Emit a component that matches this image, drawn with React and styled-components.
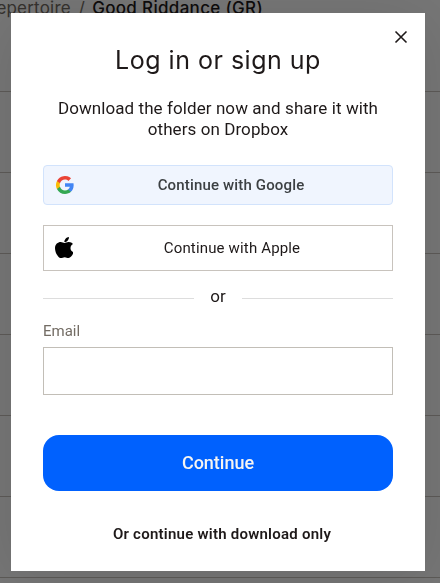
import { useState } from "react";
import styled, { createGlobalStyle } from "styled-components";

const GlobalStyle = createGlobalStyle`
  * {
    box-sizing: border-box;
  }

  body {
    margin: 0;
    overflow: hidden;
    background: #fff;
    color: #1e1919;
    font-family: Roboto, "Liberation Sans", sans-serif;
  }

  button,
  input {
    font-family: inherit;
    color: inherit;
  }
`;

const Page = styled.div`
  height: 100vh;
  overflow: hidden;
`;

const Breadcrumbs = styled.nav`
  display: flex;
  justify-content: flex-end;
  width: 263px;
  height: 92px;
  white-space: nowrap;
  font-family: Inter, "Liberation Sans", sans-serif;
  font-size: 17px;
  line-height: 16px;
  letter-spacing: 0.2px;
  color: #736c64;

  .separator {
    margin: 0 7px 0 8px;
  }

  .current {
    color: #1e1919;
    font-weight: 450;
    letter-spacing: 0.32px;
  }
`;

const FileRow = styled.div`
  height: 81px;
  border-top: 1px solid #c8c3bd;

  &:first-of-type {
    margin-top: -1px;
  }
`;

const Overlay = styled.div`
  position: fixed;
  inset: 0;
  padding: 13px 15px 12px 11px;
  background: rgba(0, 0, 0, 0.54);
`;

const Dialog = styled.div`
  position: relative;
  display: flex;
  flex-direction: column;
  height: 558px;
  padding: 30px 32px 0;
  background: #fff;
  box-shadow: 0 8px 60px rgba(0, 0, 0, 0.1);
`;

const CloseButton = styled.button`
  position: absolute;
  top: 12px;
  right: 12px;
  display: flex;
  padding: 4px;
  border: 0;
  background: none;
  cursor: pointer;
`;

const Title = styled.h2`
  height: 36px;
  margin: 0;
  text-align: center;
  white-space: nowrap;
  font-family: Inter, "Liberation Sans", sans-serif;
  font-size: 25px;
  font-weight: 400;
  line-height: 34px;
  letter-spacing: 0.5px;
`;

const Description = styled.p`
  margin: 19px 0 25px;
  text-align: center;
  white-space: nowrap;
  font-size: 17px;
  line-height: 21px;
  letter-spacing: 0.08px;
`;

const SocialButton = styled.button`
  display: flex;
  align-items: center;
  height: ${(props) => (props.$google ? "40px" : "46px")};
  margin-bottom: ${(props) => (props.$google ? "20px" : "15px")};
  padding: 0 11px;
  border: 1px solid ${(props) => (props.$google ? "#d2e3fc" : "#c8c3bd")};
  border-radius: ${(props) => (props.$google ? "4px" : "0")};
  background: ${(props) => (props.$google ? "#f0f5fe" : "#fff")};
  color: ${(props) => (props.$google ? "#3c4043" : "#1e1919")};
  font-size: 15px;
  font-weight: ${(props) => (props.$google ? 500 : 400)};
  letter-spacing: 0.16px;
  cursor: pointer;

  svg {
    flex: none;
  }

  span {
    flex: 1;
    padding-left: ${(props) => (props.$google ? "6px" : "10px")};
  }
`;

const AppleIconBox = styled.div`
  display: flex;
  padding-bottom: 1px;
`;

const Divider = styled.div`
  display: flex;
  align-items: center;
  gap: 16px;
  height: 20px;
  font-size: 17px;
  line-height: 20px;

  &::before,
  &::after {
    content: "";
    flex: 1;
    height: 1px;
    margin-top: 5px;
    background: #dddddd;
  }
`;

const Label = styled.label`
  margin-top: 15px;
  font-size: 15px;
  line-height: 20px;
  color: #736c64;
`;

const EmailInput = styled.input`
  height: 48px;
  margin-top: 6px;
  padding: 0 12px;
  border: 1px solid #c2beb7;
  border-radius: 0;
  outline: 0;
  background: #fff;
  font-size: 16px;
`;

const ContinueButton = styled.button`
  height: 56px;
  margin-top: 40px;
  padding: 0 0 2px;
  border: 0;
  border-radius: 16px;
  background: #0061fe;
  color: #f7f5f2;
  font-size: 18px;
  font-weight: 500;
  cursor: pointer;
`;

const DownloadButton = styled.button`
  align-self: center;
  height: 24px;
  margin-top: 31px;
  margin-left: 8px;
  padding: 0;
  border: 0;
  background: none;
  white-space: nowrap;
  font-size: 15px;
  font-weight: 600;
  letter-spacing: 0.24px;
  cursor: pointer;
`;

const GoogleIcon = () => (
  <svg width="20" height="18" viewBox="-1 0 20 18">
    <path
      fill="#4285f4"
      d="M17.64 9.2c0-.64-.06-1.25-.16-1.84H9v3.48h4.84a4.14 4.14 0 0 1-1.8 2.72v2.26h2.92c1.7-1.57 2.68-3.88 2.68-6.62z"
    />
    <path
      fill="#34a853"
      d="M9 18c2.43 0 4.47-.8 5.96-2.18l-2.92-2.26c-.8.54-1.84.86-3.04.86-2.34 0-4.32-1.58-5.03-3.7H.96v2.33A9 9 0 0 0 9 18z"
    />
    <path
      fill="#fbbc05"
      d="M3.97 10.72a5.41 5.41 0 0 1 0-3.44V4.95H.96a9 9 0 0 0 0 8.1z"
    />
    <path
      fill="#ea4335"
      d="M9 3.58c1.32 0 2.5.45 3.44 1.35l2.58-2.59A9 9 0 0 0 .96 4.95l3.01 2.33C4.68 5.16 6.66 3.58 9 3.58z"
    />
  </svg>
);

const AppleIcon = () => (
  <AppleIconBox>
    <svg width="18" height="21" viewBox="4 32 364.7 448" preserveAspectRatio="none">
      <path
        fill="#000"
        d="M318.7 268.7c-.2-36.7 16.4-64.4 50-84.8-18.8-26.9-47.2-41.7-84.7-44.6-35.5-2.8-74.3 20.7-88.5 20.7-15 0-49.4-19.7-76.4-19.7C63.3 141.2 4 184.8 4 273.5q0 39.3 14.4 81.2c12.8 36.7 59 126.7 107.2 125.2 25.2-.6 43-17.9 75.8-17.9 31.8 0 48.3 17.9 76.4 17.9 48.6-.7 90.4-82.5 102.6-119.3-65.2-30.7-61.7-90-61.7-91.9zm-56.6-164.2c27.3-32.4 24.8-61.9 24-72.5-24.1 1.4-52 16.4-67.9 34.9-17.5 19.8-27.8 44.3-25.6 71.9 26.1 2 49.9-11.4 69.5-34.3z"
      />
    </svg>
  </AppleIconBox>
);

const CloseIcon = () => (
  <svg width="16" height="16" viewBox="0 0 16 16">
    <path d="M2.5 2.5l11 11M13.5 2.5l-11 11" stroke="#1e1919" strokeWidth="1.6" />
  </svg>
);

export default function App() {
  const [email, setEmail] = useState("");

  return (
    <>
      <GlobalStyle />
      <Page>
        <Breadcrumbs>
          <span>Repertoire</span>
          <span className="separator">/</span>
          <span className="current">Good Riddance (GR)</span>
        </Breadcrumbs>
        {[1, 2, 3, 4, 5, 6, 7].map((row) => (
          <FileRow key={row} />
        ))}
      </Page>
      <Overlay>
        <Dialog role="dialog" aria-modal="true">
          <CloseButton aria-label="Close">
            <CloseIcon />
          </CloseButton>
          <Title>Log in or sign up</Title>
          <Description>
            Download the folder now and share it with
            <br />
            others on Dropbox
          </Description>
          <SocialButton $google>
            <GoogleIcon />
            <span>Continue with Google</span>
          </SocialButton>
          <SocialButton>
            <AppleIcon />
            <span>Continue with Apple</span>
          </SocialButton>
          <Divider>or</Divider>
          <Label htmlFor="email">Email</Label>
          <EmailInput
            id="email"
            type="email"
            value={email}
            onChange={(e) => setEmail(e.target.value)}
          />
          <ContinueButton>Continue</ContinueButton>
          <DownloadButton>Or continue with download only</DownloadButton>
        </Dialog>
      </Overlay>
    </>
  );
}
